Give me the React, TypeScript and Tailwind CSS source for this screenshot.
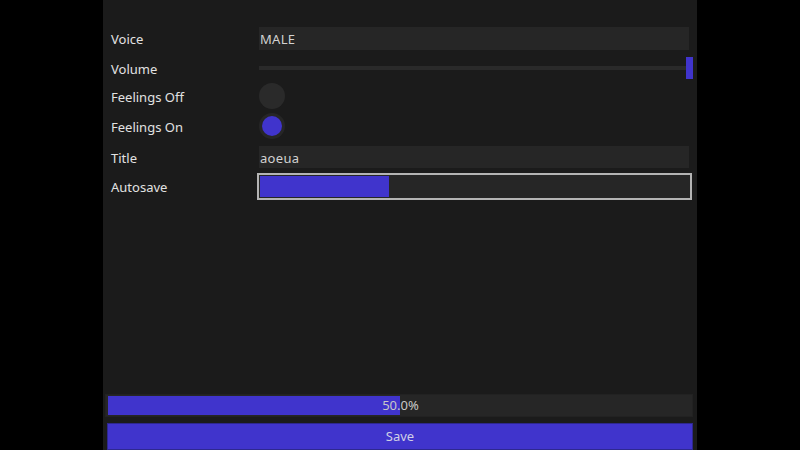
import React from "react";

export default function App() {
  return (
    <div className="w-[800px] h-[450px] bg-black flex justify-center overflow-hidden" style={{ fontFamily: '"Noto Sans", "Open Sans", sans-serif' }}>
      <div className="w-[594px] h-[450px] bg-[#1b1b1b] flex flex-col text-[13px]">
        <div className="flex flex-col pt-[25px] pl-[8px] pr-[8px]">
          {/* Voice */}
          <div className="flex items-center h-[27px]">
            <div className="w-[148px] text-[#e2e2e2] pt-[2px]">Voice</div>
            <div className="flex-1 h-[23px] bg-[#262626] flex items-center pl-[1px] pt-[2px] text-[#d2d2d2] tracking-[0.3px]">MALE</div>
          </div>
          {/* Volume */}
          <div className="flex items-center h-[26px] mt-[3px]">
            <div className="w-[148px] text-[#e2e2e2] pt-[3px]">Volume</div>
            <div className="flex-1 flex items-center h-[22px] pr-0">
              <div className="flex-1 h-[4px] bg-[#2a2a2a]" />
              <div className="w-[7px] h-[22px] bg-[#4034cc] mr-[-4px]" />
            </div>
          </div>
          {/* Feelings Off */}
          <div className="flex items-center h-[26px] mt-[2px]">
            <div className="w-[148px] text-[#e2e2e2] pt-[4px]">Feelings Off</div>
            <div className="w-[26px] h-[26px] rounded-full bg-[#2a2a2a]" />
          </div>
          {/* Feelings On */}
          <div className="flex items-center h-[26px] mt-[4px]">
            <div className="w-[148px] text-[#e2e2e2] pt-[4px]">Feelings On</div>
            <div className="w-[26px] h-[26px] rounded-full bg-[#262626] flex items-center justify-center">
              <div className="w-[20px] h-[20px] rounded-full bg-[#4034cc]" />
            </div>
          </div>
          {/* Title */}
          <div className="flex items-center h-[28px] mt-[4px]">
            <div className="w-[148px] text-[#e2e2e2] pt-[3px]">Title</div>
            <div className="flex-1 h-[22px] bg-[#262626] flex items-center pl-[1px] pt-[3px] text-[#d2d2d2] tracking-[0.3px]">aoeua</div>
          </div>
          {/* Autosave */}
          <div className="flex items-center h-[27px] mt-[2px]">
            <div className="w-[146px] text-[#e2e2e2] pt-[2px]">Autosave</div>
            <div className="flex-1 h-[27px] mr-[-3px] border-2 border-[#b4b4b4] bg-[#262626] p-[1px]">
              <div className="w-[129px] h-full bg-[#4034cc]" />
            </div>
          </div>
        </div>
        <div className="flex-1" />
        <div className="flex flex-col pl-[2px] pr-[4px]">
          <div className="h-[23px] bg-[#262626] border border-[#222] relative flex p-[1px] pl-[2px]">
            <div className="h-full bg-[#4034cc]" style={{ width: "50%" }} />
            <div className="absolute inset-0 flex items-center justify-center text-[#c8c8c8] text-[13px] pl-[3px] pt-[1px]">50.0%</div>
          </div>
          <div className="mt-[6px] ml-[2px] h-[27px] bg-[#4034cc] border border-[#2e2890] flex items-center justify-center text-[#d0d0e6] text-[13px]">Save</div>
        </div>
      </div>
    </div>
  );
}
